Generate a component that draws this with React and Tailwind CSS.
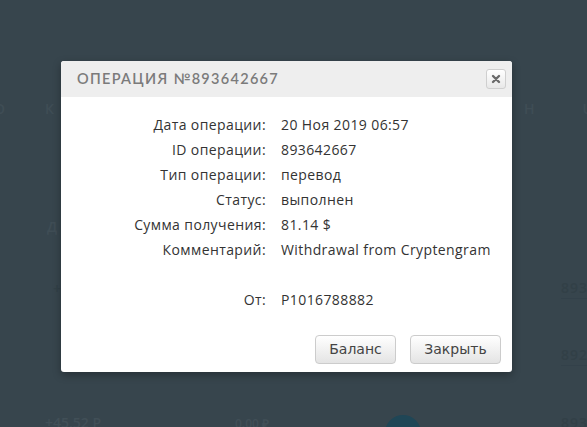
import React from "react";

const rows = [
  ["Дата операции:", "20 Ноя 2019 06:57"],
  ["ID операции:", "893642667"],
  ["Тип операции:", "перевод"],
  ["Статус:", "выполнен"],
  ["Сумма получения:", "81.14 $"],
  ["Комментарий:", "Withdrawal from Cryptengram"],
  ["", ""],
  ["От:", "P1016788882"],
];

export default function App() {
  return (
    <div className="relative w-[587px] h-[427px] overflow-hidden bg-[#37454d] font-['Open_Sans',sans-serif]">
      {/* faint background page */}
      <div className="flex flex-col text-[#3f4d55] text-[14px] font-semibold">
        <div className="h-[97px]" />
        <div className="flex h-[22px] items-center justify-between px-0">
          <div className="flex gap-[40px]">
            <span className="-ml-[6px]">О</span>
            <span>К</span>
          </div>
          <div className="flex gap-[48px] -mr-[6px]">
            <span>Н</span>
            <span>U</span>
          </div>
        </div>
        <div className="h-[97px]" />
        <div className="flex h-[20px] items-center pl-[47px]">Д</div>
        <div className="h-[42px]" />
        <div className="flex h-[20px] items-center justify-between pl-[53px] text-[#324047]">
          <span>+</span>
          <span className="border-b border-[#33414a] tracking-[1px] -mr-[10px]">8936</span>
        </div>
        <div className="h-[47px]" />
        <div className="flex h-[20px] items-center justify-end text-[#324047]">
          <span className="border-b border-[#33414a] tracking-[1px] -mr-[10px]">8926</span>
        </div>
        <div className="h-[38px]" />
        <div className="flex h-[30px] items-end pl-[45px] text-[#414f57]">
          <span className="w-[190px]">+45.52 Р</span>
          <span className="w-[150px] text-[12px]">0.00 ₽</span>
          <span className="w-[36px] h-[36px] rounded-full bg-[#1f4656] flex items-center justify-center text-[#2f5566] text-[13px] -mb-[18px]">P</span>
          <span className="ml-auto -mr-[10px] text-[#324047] tracking-[1px]">8932</span>
        </div>
      </div>

      {/* modal overlay */}
      <div className="absolute left-[61px] top-[61px] w-[451px] h-[311px] bg-white rounded-[3px] shadow-[0_3px_8px_rgba(0,0,0,0.3)] flex flex-col">
        <div className="h-[36px] bg-[#eeeeee] rounded-t-[3px] flex items-center justify-between pl-[16px] pr-[6px]">
          <span className="text-[#7b7b7b] text-[14.5px] font-semibold tracking-[1.3px] font-['Lato',sans-serif]">ОПЕРАЦИЯ №893642667</span>
          <button className="w-[20px] h-[20px] border border-[#cfcfcf] rounded-[3px] bg-gradient-to-b from-white to-[#e8e8e8] flex items-center justify-center">
            <svg width="10" height="10" viewBox="0 0 10 10">
              <path d="M2 2L8 8M8 2L2 8" stroke="#6a6a6a" strokeWidth="2.4" strokeLinecap="round" />
            </svg>
          </button>
        </div>
        <div className="flex flex-col pt-[15px]">
          {rows.map(([l, v], i) => (
            <div key={i} className="flex h-[25px] items-center text-[14px] tracking-[0.4px] text-[#333]">
              <span className="w-[205px] text-right">{l}</span>
              <span className="ml-[15px]">{v}</span>
            </div>
          ))}
        </div>
        <div className="flex justify-end gap-[14px] pr-[11px] mt-[23px]">
          <button className="w-[81px] h-[29px] border border-[#cccccc] rounded-[4px] bg-gradient-to-b from-white to-[#e4e4e4] text-[14px] text-[#444] font-['DejaVu_Sans',sans-serif]">Баланс</button>
          <button className="w-[91px] h-[29px] border border-[#cccccc] rounded-[4px] bg-gradient-to-b from-white to-[#e4e4e4] text-[14px] text-[#444] font-['DejaVu_Sans',sans-serif]">Закрыть</button>
        </div>
      </div>
    </div>
  );
}
